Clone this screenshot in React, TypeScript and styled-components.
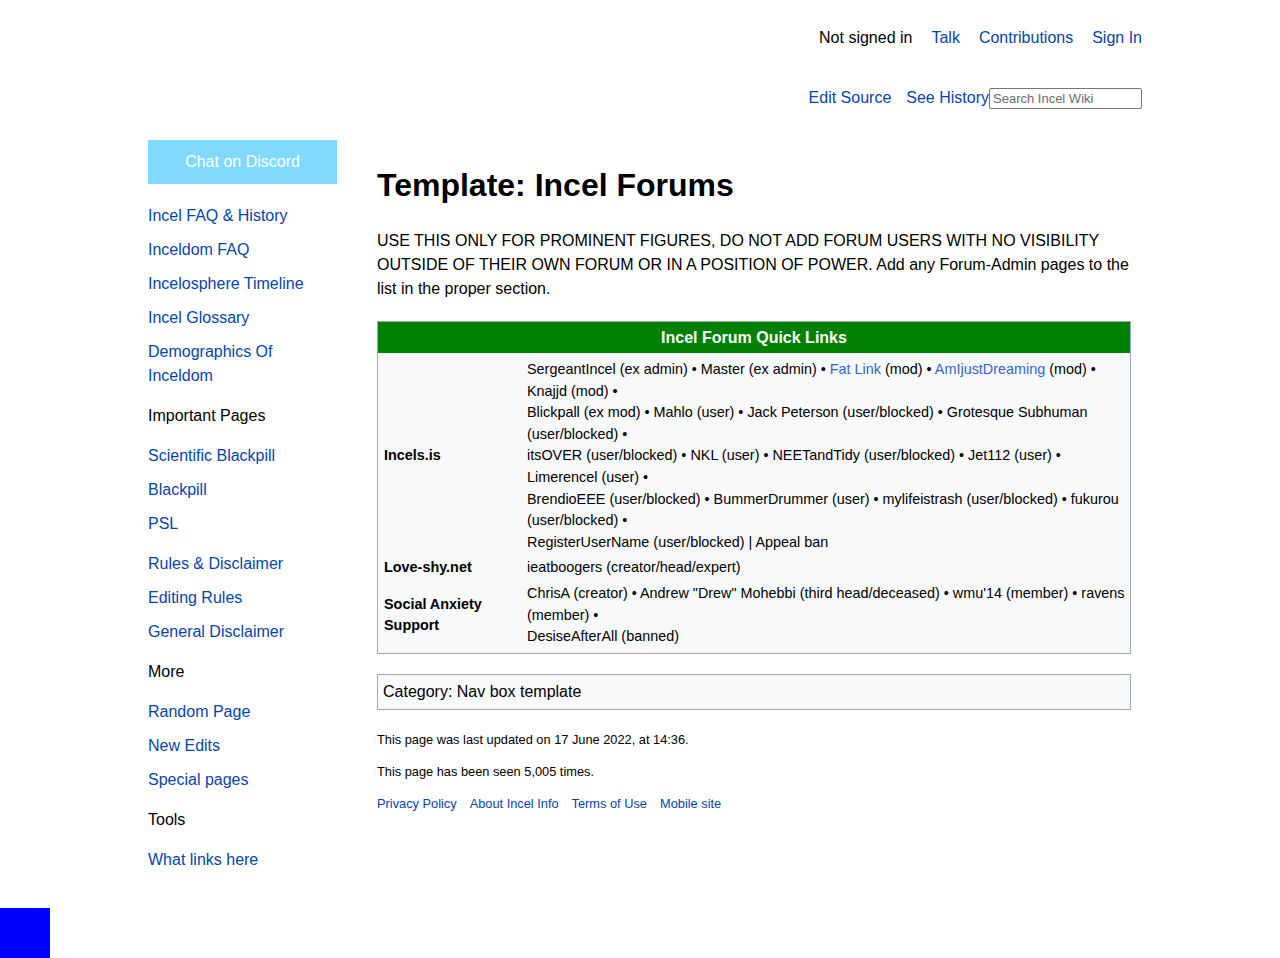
import React from 'react';
import styled, { createGlobalStyle } from 'styled-components';

const GlobalStyle = createGlobalStyle`
  body {
    margin: 0;
    background: #fff;
    color: #000;
    font-family: "Liberation Sans", Arial, Helvetica, sans-serif;
  }
  a {
    color: #0645ad;
    text-decoration: none;
  }
`;

type Group = { heading?: string; links: string[] };

const sideGroups: Group[] = [
  {
    links: ['Incel FAQ & History', 'Inceldom FAQ', 'Incelosphere Timeline', 'Incel Glossary', 'Demographics Of Inceldom'],
  },
  { heading: 'Important Pages', links: ['Scientific Blackpill', 'Blackpill', 'PSL'] },
  { links: ['Rules & Disclaimer', 'Editing Rules', 'General Disclaimer'] },
  { heading: 'More', links: ['Random Page', 'New Edits', 'Special pages'] },
  { heading: 'Tools', links: ['What links here'] },
];

type Piece = string | { link: string };

const incelsLines: Piece[][] = [
  [
    'SergeantIncel (ex admin) • Master (ex admin) • ',
    { link: 'Fat Link' },
    ' (mod) • ',
    { link: 'AmIjustDreaming' },
    ' (mod) • Knajjd (mod) •',
  ],
  ['Blickpall (ex mod) • Mahlo (user) • Jack Peterson (user/blocked) • Grotesque Subhuman (user/blocked) •'],
  ['itsOVER (user/blocked) • NKL (user) • NEETandTidy (user/blocked) • Jet112 (user) • Limerencel (user) •'],
  ['BrendioEEE (user/blocked) • BummerDrummer (user) • mylifeistrash (user/blocked) • fukurou (user/blocked) •'],
  ['RegisterUserName (user/blocked) | Appeal ban'],
];

const forumRows: { label: string; lines: Piece[][] }[] = [
  { label: 'Incels.is', lines: incelsLines },
  { label: 'Love-shy.net', lines: [['ieatboogers (creator/head/expert)']] },
  {
    label: 'Social Anxiety Support',
    lines: [
      ['ChrisA (creator) • Andrew "Drew" Mohebbi (third head/deceased) • wmu\'14 (member) • ravens (member) •'],
      ['DesiseAfterAll (banned)'],
    ],
  },
];

export default function App() {
  return (
    <>
      <GlobalStyle />
      <Page>
        <Header>
          <TopRow>
            <Muted>Not signed in</Muted>
            <a href="#">Talk</a>
            <a href="#">Contributions</a>
            <a href="#">Sign In</a>
          </TopRow>
          <ActionRow>
            <ActionLinks>
              <a href="#">Edit Source</a>
              <a href="#">See History</a>
            </ActionLinks>
            <Search placeholder="Search Incel Wiki" />
          </ActionRow>
        </Header>
        <Layout>
          <Sidebar>
            <Discord href="#">Chat on Discord</Discord>
            {sideGroups.map((g, i) => (
              <SideSection key={i}>
                {g.heading && <SideHeading>{g.heading}</SideHeading>}
                {g.links.map(l => (
                  <SideLink key={l} href="#">
                    {l}
                  </SideLink>
                ))}
              </SideSection>
            ))}
          </Sidebar>
          <Main>
            <Title>Template: Incel Forums</Title>
            <Intro>
              USE THIS ONLY FOR PROMINENT FIGURES, DO NOT ADD FORUM USERS WITH NO VISIBILITY OUTSIDE OF THEIR OWN
              FORUM OR IN A POSITION OF POWER. Add any Forum-Admin pages to the list in the proper section.
            </Intro>
            <NavBox>
              <NavTitle>Incel Forum Quick Links</NavTitle>
              <NavBody>
                {forumRows.map(row => (
                  <React.Fragment key={row.label}>
                    <NavLabel>{row.label}</NavLabel>
                    <NavList>
                      {row.lines.map((line, i) => (
                        <div key={i}>
                          {line.map((p, j) =>
                            typeof p === 'string' ? (
                              <React.Fragment key={j}>{p}</React.Fragment>
                            ) : (
                              <NavLink key={j} href="#">
                                {p.link}
                              </NavLink>
                            ),
                          )}
                        </div>
                      ))}
                    </NavList>
                  </React.Fragment>
                ))}
              </NavBody>
            </NavBox>
            <Category>Category: Nav box template</Category>
            <FooterLine>This page was last updated on 17 June 2022, at 14:36.</FooterLine>
            <FooterLine>This page has been seen 5,005 times.</FooterLine>
            <FooterLinks>
              <a href="#">Privacy Policy</a>
              <a href="#">About Incel Info</a>
              <a href="#">Terms of Use</a>
              <a href="#">Mobile site</a>
            </FooterLinks>
          </Main>
        </Layout>
      </Page>
      <Corner />
    </>
  );
}

const Page = styled.div`
  width: 994px;
  margin: 0 138px 0 148px;
  padding-top: 26px;
  padding-bottom: 40px;
  font-size: 16px;
`;

const Header = styled.header`
  display: flex;
  flex-direction: column;
  align-items: flex-end;
`;

const TopRow = styled.nav`
  display: flex;
  gap: 19px;
  line-height: 24px;
`;

const Muted = styled.span`
  color: #000;
`;

const ActionRow = styled.div`
  display: flex;
  align-items: center;
  margin-top: 36px;
  line-height: 24px;
`;

const ActionLinks = styled.div`
  display: flex;
  gap: 15px;
`;

const Search = styled.input`
  box-sizing: border-box;
  width: 153px;
  height: 21px;
  padding: 1px 3px;
  border: 1px solid #767676;
  border-radius: 2px;
  font-family: "Liberation Sans", Arial, sans-serif;
  font-size: 13px;
  &::placeholder {
    color: #6b6b6b;
  }
`;

const Layout = styled.div`
  display: grid;
  grid-template-columns: 189px 754px;
  column-gap: 40px;
  margin-top: 30px;
`;

const Sidebar = styled.aside`
  display: flex;
  flex-direction: column;
`;

const Discord = styled.a`
  && {
    color: #fff;
  }
  display: flex;
  align-items: center;
  justify-content: center;
  height: 44px;
  background: #80d9ff;
  margin-bottom: 15px;
`;

const SideSection = styled.div`
  display: flex;
  flex-direction: column;
  & + & {
    margin-top: 6px;
  }
`;

const SideHeading = styled.div`
  color: #000;
  line-height: 24px;
  padding: 5px 0;
  margin-bottom: 6px;
`;

const SideLink = styled.a`
  line-height: 24px;
  padding: 5px 0;
`;

const Main = styled.main`
  display: flex;
  flex-direction: column;
`;

const Title = styled.h1`
  margin: 25px 0 0;
  font-size: 32px;
  line-height: 40px;
  font-weight: bold;
`;

const Intro = styled.p`
  margin: 24px 0 0;
  line-height: 24px;
`;

const NavBox = styled.div`
  margin-top: 20px;
  border: 1px solid #a2a9b1;
  background: #f8f9fa;
  font-size: 14.4px;
`;

const NavTitle = styled.div`
  background: #008000;
  color: #fff;
  font-weight: bold;
  font-size: 16px;
  text-align: center;
  line-height: 31px;
`;

const NavBody = styled.div`
  display: grid;
  grid-template-columns: 143px 1fr;
  row-gap: 4px;
  padding: 6px 0 5px;
  line-height: 21.6px;
`;

const NavLabel = styled.div`
  display: flex;
  align-items: center;
  padding-left: 6px;
  padding-right: 6px;
  font-weight: bold;
`;

const NavList = styled.div`
  padding: 0 4px 0 6px;
`;

const NavLink = styled.a`
  && {
    color: #3366cc;
  }
`;

const Category = styled.div`
  margin-top: 20px;
  border: 1px solid #a2a9b1;
  background: #f8f9fa;
  padding: 0 5px;
  line-height: 34px;
`;

const FooterLine = styled.p`
  margin: 21px 0 0;
  font-size: 12.8px;
  line-height: 18px;
  & + & {
    margin-top: 14px;
  }
`;

const FooterLinks = styled.div`
  display: flex;
  gap: 13px;
  margin-top: 14px;
  font-size: 12.8px;
  line-height: 18px;
`;

const Corner = styled.div`
  position: fixed;
  left: 0;
  bottom: 0;
  width: 50px;
  height: 50px;
  background: #0000ff;
`;
